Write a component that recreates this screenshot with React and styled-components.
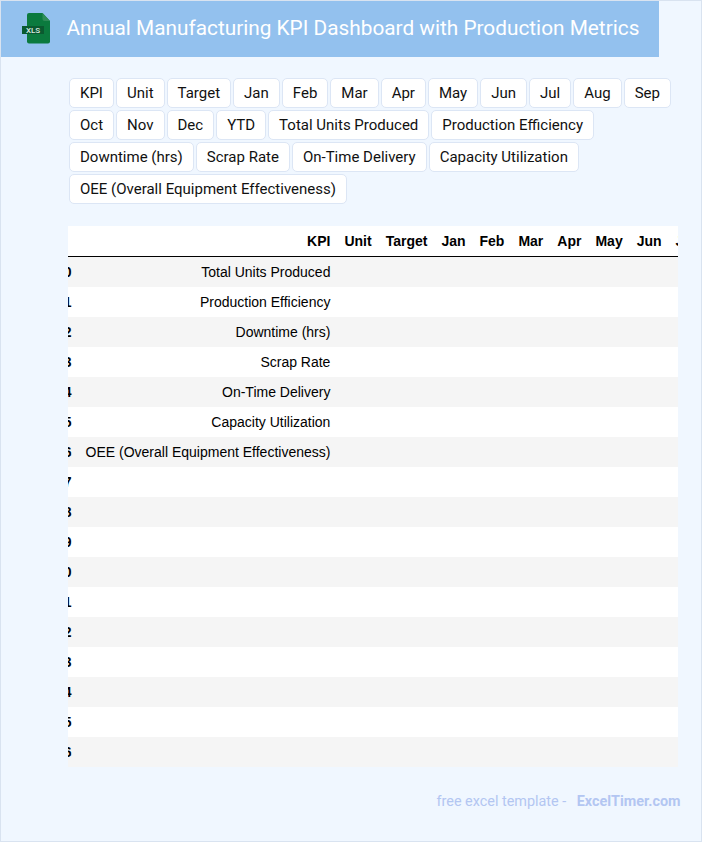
import React from "react";
import styled, { createGlobalStyle } from "styled-components";

const chips = [
  "KPI", "Unit", "Target", "Jan", "Feb", "Mar", "Apr", "May", "Jun", "Jul", "Aug", "Sep",
  "Oct", "Nov", "Dec", "YTD", "Total Units Produced", "Production Efficiency",
  "Downtime (hrs)", "Scrap Rate", "On-Time Delivery", "Capacity Utilization",
  "OEE (Overall Equipment Effectiveness)",
];

const columns = ["KPI", "Unit", "Target", "Jan", "Feb", "Mar", "Apr", "May", "Jun", "Jul", "Aug", "Sep", "Oct", "Nov", "Dec", "YTD"];

const kpis = [
  "Total Units Produced",
  "Production Efficiency",
  "Downtime (hrs)",
  "Scrap Rate",
  "On-Time Delivery",
  "Capacity Utilization",
  "OEE (Overall Equipment Effectiveness)",
];

const rows = Array.from({ length: 17 }, (_, i) => kpis[i] ?? "");

const GlobalStyle = createGlobalStyle`
  html, body {
    margin: 0;
    padding: 0;
    background: #f0f7ff;
  }
`;

const Page = styled.div`
  box-sizing: border-box;
  width: 702px;
  height: 842px;
  border: 1px solid #d9e3f0;
  background: #f0f7ff;
  font-family: Roboto, sans-serif;
  overflow: hidden;
`;

const Header = styled.header`
  display: flex;
  align-items: center;
  gap: 15.5px;
  width: 658px;
  height: 56px;
  padding: 0 0 2px 21px;
  box-sizing: border-box;
  background: #93c1ee;
`;

const Title = styled.h1`
  margin: 0;
  font-size: 20.8px;
  font-weight: 400;
  color: #fff;
  white-space: nowrap;
`;

const ChipList = styled.div`
  display: flex;
  flex-wrap: wrap;
  gap: 2px;
  width: 612px;
  margin: 21px 0 0 68px;
`;

const Chip = styled.span`
  box-sizing: border-box;
  height: 30px;
  padding: 0 10px;
  border: 1px solid #dce6f5;
  border-radius: 5px;
  background: #fff;
  color: #111;
  font-size: 15px;
  line-height: 28px;
  white-space: nowrap;
`;

const TableWrap = styled.div`
  width: 610px;
  margin: 22px 0 0 67px;
  overflow: hidden;
`;

const Table = styled.table`
  width: max-content;
  margin-left: -19px;
  border-collapse: collapse;
  font-family: "Liberation Sans", Arial, sans-serif;
  font-size: 14px;
  line-height: 16px;
  color: #000;
  background: #fff;
`;

const HeadCell = styled.th`
  padding: 7px;
  height: 16px;
  text-align: right;
  font-weight: 700;
  white-space: nowrap;
  border-bottom: 1px solid #000;
`;

const Row = styled.tr`
  background: ${(p) => (p.$odd ? "#fff" : "#f5f5f5")};
`;

const IndexCell = styled.th`
  padding: 7px;
  height: 16px;
  text-align: right;
  font-weight: 700;
`;

const Cell = styled.td`
  padding: 7px;
  height: 16px;
  text-align: right;
  white-space: nowrap;
`;

const Footer = styled.footer`
  display: flex;
  justify-content: flex-end;
  gap: 10.5px;
  width: 679.5px;
  margin-top: 27px;
  font-size: 14.4px;
  line-height: 16px;
  color: #b3c6f2;
`;

const FooterLink = styled.span`
  font-weight: 700;
`;

function XlsIcon() {
  return (
    <svg width="29" height="31" viewBox="0 0 29 31" aria-hidden="true">
      <path d="M5 2a2 2 0 0 1 2-2h13.5L28 8v20.5a2 2 0 0 1-2 2H7a2 2 0 0 1-2-2z" fill="#0b7a3e" />
      <path d="M20.5 0L28 8h-5.5a2 2 0 0 1-2-2z" fill="#2f8c58" />
      <rect x="0" y="13" width="22" height="8" fill="#0a5a30" />
      <text x="11" y="20" textAnchor="middle" fontFamily="Roboto, sans-serif" fontSize="8" fontWeight="500" fill="#dcebe2">
        XLS
      </text>
    </svg>
  );
}

export default function App() {
  return (
    <>
      <GlobalStyle />
      <Page>
        <Header>
          <XlsIcon />
          <Title>Annual Manufacturing KPI Dashboard with Production Metrics</Title>
        </Header>
        <ChipList>
          {chips.map((c) => (
            <Chip key={c}>{c}</Chip>
          ))}
        </ChipList>
        <TableWrap>
          <Table>
            <thead>
              <tr>
                <HeadCell />
                {columns.map((c) => (
                  <HeadCell key={c}>{c}</HeadCell>
                ))}
              </tr>
            </thead>
            <tbody>
              {rows.map((kpi, i) => (
                <Row key={i} $odd={i % 2 === 1}>
                  <IndexCell>{i}</IndexCell>
                  <Cell>{kpi}</Cell>
                  {columns.slice(1).map((c) => (
                    <Cell key={c} />
                  ))}
                </Row>
              ))}
            </tbody>
          </Table>
        </TableWrap>
        <Footer>
          <span>free excel template -</span>
          <FooterLink>ExcelTimer.com</FooterLink>
        </Footer>
      </Page>
    </>
  );
}
